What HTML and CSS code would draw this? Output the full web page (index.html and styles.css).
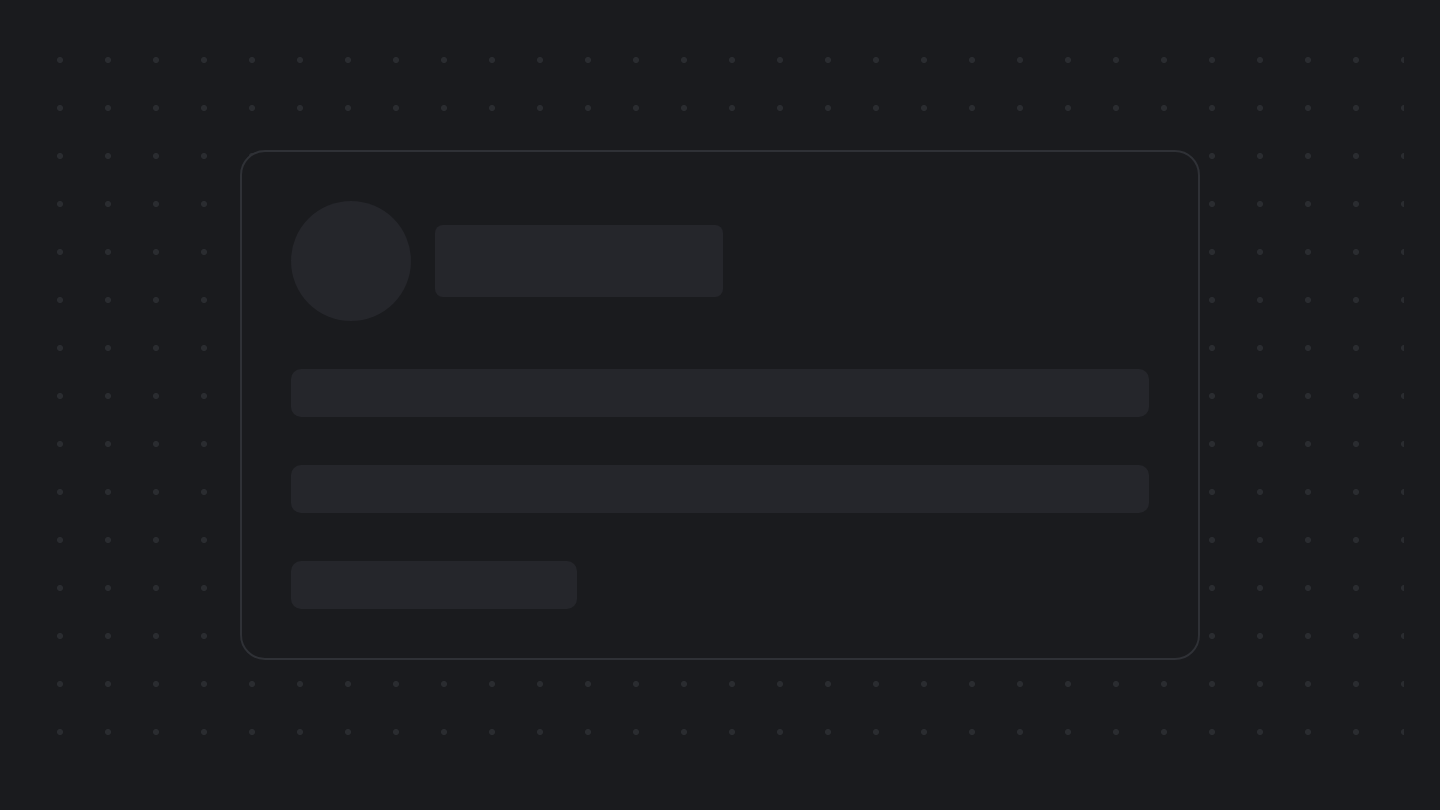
FILE: index.html
```html
<!DOCTYPE html>
<html>
<head>
<meta charset="utf-8">
<link rel="stylesheet" href="styles.css">
</head>
<body>
<div class="page">
  <div class="grid">
    <div class="card">
      <div class="head">
        <div class="avatar"></div>
        <div class="sk title"></div>
      </div>
      <div class="sk line"></div>
      <div class="sk line"></div>
      <div class="sk line short"></div>
    </div>
  </div>
</div>
</body>
</html>
```
FILE: styles.css
```css
html, body {
  margin: 0;
  padding: 0;
  background: #1a1b1e;
  font-family: "Inter", "Liberation Sans", sans-serif;
}
.page {
  width: 1440px;
  height: 810px;
  padding: 36px;
  box-sizing: border-box;
}
.grid {
  width: 100%;
  height: 100%;
  background-image: radial-gradient(circle at 24px 24px, #2a2c30 0, #2a2c30 2.6px, rgba(26,27,30,0) 3.4px);
  background-size: 48px 48px;
  background-position: 0 0;
  display: flex;
  align-items: center;
  justify-content: center;
}
.card {
  width: 960px;
  height: 510px;
  box-sizing: border-box;
  border: 2px solid #2f3136;
  border-radius: 25px;
  background: #1a1b1e;
  padding: 49px;
  display: flex;
  flex-direction: column;
  gap: 48px;
}
.head {
  display: flex;
  align-items: center;
  gap: 24px;
}
.avatar {
  width: 120px;
  height: 120px;
  border-radius: 50%;
  background: #25262b;
  flex: none;
}
.sk {
  background: #25262b;
  border-radius: 10px;
}
.title {
  width: 288px;
  height: 72px;
  border-radius: 8px;
}
.line {
  height: 48px;
}
.short {
  width: 286px;
}
```
